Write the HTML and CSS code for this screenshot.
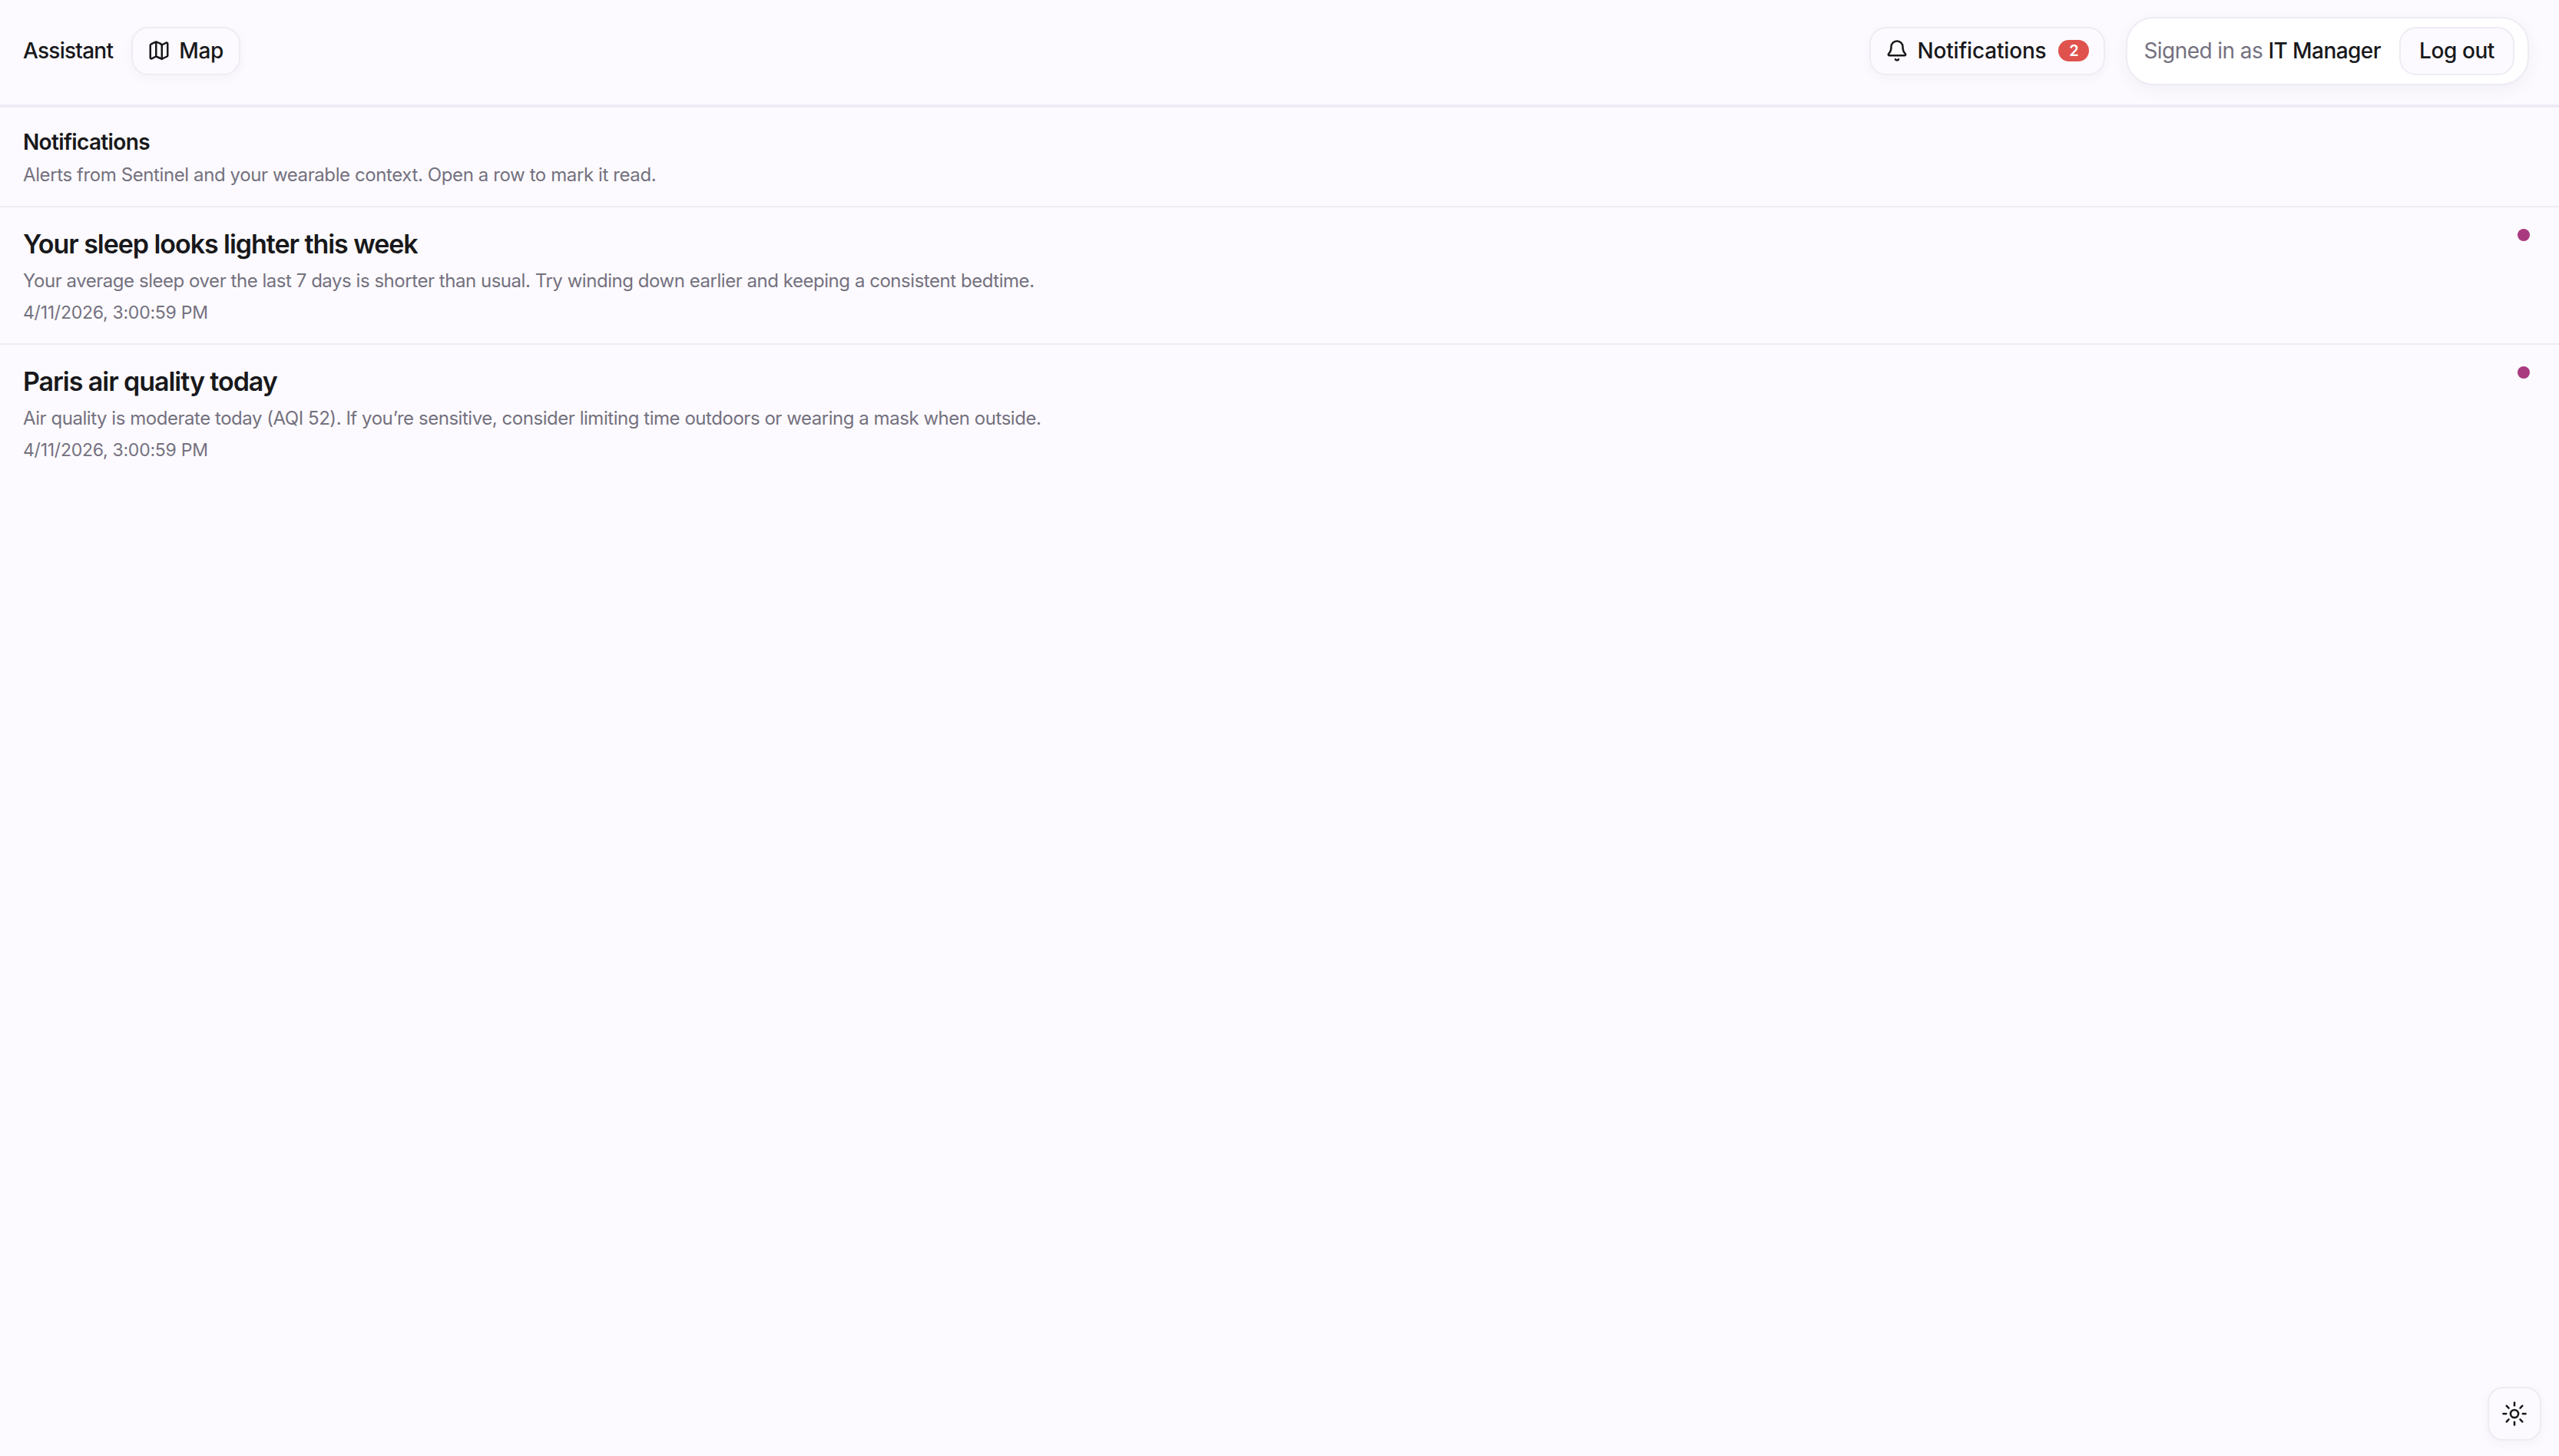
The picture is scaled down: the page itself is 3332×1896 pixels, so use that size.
FILE: index.html
```html
<!DOCTYPE html>
<html lang="en">
<head>
<meta charset="utf-8">
<title>Notifications</title>
<link rel="stylesheet" href="styles.css">
</head>
<body>
<header class="topbar">
  <nav class="nav-left">
    <a class="nav-link">Assistant</a>
    <a class="btn btn-map">
      <svg class="icon icon-map" viewBox="0 0 24 24"><path d="M14.100 4.900 9.900 3.100a2 2 0 0 0-1.800 0L3.600 5.300A1 1 0 0 0 3 6.200V19.400a1 1 0 0 0 1.400.900l3.700-1.900a2 2 0 0 1 1.800 0l4.200 1.800a2 2 0 0 0 1.800 0l4.500-2.200a1 1 0 0 0 .600-.900V4.600a1 1 0 0 0-1.400-.900l-3.700 1.900a2 2 0 0 1-1.800 0z"/><path d="M15 5.800v14.900"/><path d="M9 3.300v14.900"/></svg>
      <span>Map</span>
    </a>
  </nav>
  <div class="nav-right">
    <a class="btn btn-notif">
      <svg class="icon icon-bell" viewBox="0 0 24 24"><path d="M10.300 21a2 2 0 0 0 3.400 0"/><path d="M3.300 15.300A1 1 0 0 0 4 17h16a1 1 0 0 0 .700-1.700C19.400 14 18 12.500 18 8A6 6 0 0 0 6 8c0 4.500-1.400 6-2.700 7.300"/></svg>
      <span class="notif-label">Notifications</span>
      <span class="badge">2</span>
    </a>
    <div class="account">
      <span class="signed">Signed in as <span class="user">IT Manager</span></span>
      <a class="btn btn-logout">Log out</a>
    </div>
  </div>
</header>
<main>
  <section class="intro">
    <h1 class="intro-title">Notifications</h1>
    <p class="intro-sub">Alerts from Sentinel and your wearable context. Open a row to mark it read.</p>
  </section>
  <article class="row">
    <div class="row-text">
      <h2 class="row-title">Your sleep looks lighter this week</h2>
      <p class="row-body">Your average sleep over the last 7 days is shorter than usual. Try winding down earlier and keeping a consistent bedtime.</p>
      <time class="row-time">4/11/2026, 3:00:59 PM</time>
    </div>
    <span class="dot"></span>
  </article>
  <article class="row">
    <div class="row-text">
      <h2 class="row-title">Paris air quality today</h2>
      <p class="row-body">Air quality is moderate today (AQI 52). If you’re sensitive, consider limiting time outdoors or wearing a mask when outside.</p>
      <time class="row-time">4/11/2026, 3:00:59 PM</time>
    </div>
    <span class="dot"></span>
  </article>
</main>
<button class="theme-toggle" type="button" aria-label="Toggle theme">
  <svg class="icon icon-sun" viewBox="0 0 24 24"><circle cx="12" cy="12" r="3.200"/><path d="M12 2.800v2.400"/><path d="M12 18.800v2.400"/><path d="m5.500 5.500 1.800 1.800"/><path d="m16.700 16.700 1.800 1.800"/><path d="M2.800 12h2.400"/><path d="M18.800 12h2.400"/><path d="m7.300 16.700-1.800 1.800"/><path d="m18.500 5.500-1.800 1.800"/></svg>
</button>
</body>
</html>
```
FILE: styles.css
```css
* { box-sizing: border-box; }
html, body { margin: 0; height: 100%; }
body {
  background: #fcfafe;
  color: #18181b;
  font-family: Inter, "Liberation Sans", sans-serif;
  overflow: hidden;
}
h1, h2, p { margin: 0; }
.topbar {
  display: flex;
  align-items: center;
  justify-content: space-between;
  height: 140px;
  padding: 0 39px 4px 30px;
  border-bottom: 4px solid #eeebf5;
}
.nav-left, .nav-right { display: flex; align-items: center; }
.nav-left { gap: 24px; }
.nav-right { gap: 27px; }
.nav-link { font-size: 28px; font-weight: 500; letter-spacing: -0.75px; }
.btn {
  display: inline-flex;
  align-items: center;
  height: 63px;
  border: 2px solid #eeebf5;
  border-radius: 22px;
  background: #fcfafe;
  font-size: 28px;
  font-weight: 500;
  letter-spacing: -0.4px;
  box-shadow: 0 4px 14px rgba(60, 50, 100, 0.04);
}
.icon {
  fill: none;
  stroke: currentColor;
  stroke-width: 2;
  stroke-linecap: round;
  stroke-linejoin: round;
  flex: none;
}
.btn-map { padding: 0 20px 0 19px; gap: 11px; }
.icon-map { width: 30px; height: 30px; }
.btn-notif { padding: 0 19px 0 19px; gap: 11px; }
.icon-bell { width: 30px; height: 30px; }
.notif-label { letter-spacing: -0.17px; }
.badge {
  display: inline-flex;
  align-items: center;
  justify-content: center;
  width: 40px;
  height: 28px;
  margin-left: 5px;
  border-radius: 14px;
  background: #e0524e;
  color: #fff;
  font-size: 20px;
  font-weight: 600;
  letter-spacing: 0;
}
.account {
  display: flex;
  align-items: center;
  gap: 24px;
  height: 89px;
  padding: 0 17px 0 21px;
  border: 2px solid #eeebf5;
  border-radius: 36px;
  background: #fff;
  box-shadow: 0 6px 20px rgba(60, 50, 100, 0.05);
}
.signed { font-size: 28px; color: #74717f; letter-spacing: -0.57px; }
.user { color: #18181b; font-weight: 500; }
.btn-logout { padding: 0 24px; box-shadow: none; }
.intro {
  height: 130px;
  padding: 27px 30px 0;
  border-bottom: 2px solid #eeebf5;
}
.intro-title { font-size: 28px; font-weight: 600; line-height: 36px; letter-spacing: -0.65px; }
.intro-sub { margin-top: 8px; font-size: 24px; line-height: 34px; color: #74717f; letter-spacing: -0.4px; }
.row {
  display: flex;
  justify-content: space-between;
  align-items: flex-start;
  height: 179px;
  padding: 28px 38px 0 30px;
  border-bottom: 2px solid #eeebf5;
}
.row:last-child { border-bottom: 0; }
.row-title { font-size: 34px; font-weight: 600; line-height: 40px; letter-spacing: -1.05px; }
.row-body { margin-top: 10px; font-size: 24px; line-height: 36px; color: #74717f; letter-spacing: -0.46px; }
.row-time { display: block; margin-top: 7px; font-size: 23px; line-height: 32px; color: #74717f; letter-spacing: -0.25px; }
.dot { width: 16px; height: 16px; border-radius: 50%; background: #a93a80; }
.theme-toggle {
  position: fixed;
  right: 23px;
  bottom: 20px;
  display: flex;
  align-items: center;
  justify-content: center;
  width: 70px;
  height: 70px;
  padding: 0;
  border: 2px solid #eeebf5;
  border-radius: 20px;
  background: #fcfafe;
  color: #18181b;
  box-shadow: 0 4px 14px rgba(60, 50, 100, 0.04);
}
.icon-sun { width: 38px; height: 38px; stroke-width: 1.6; }
```
